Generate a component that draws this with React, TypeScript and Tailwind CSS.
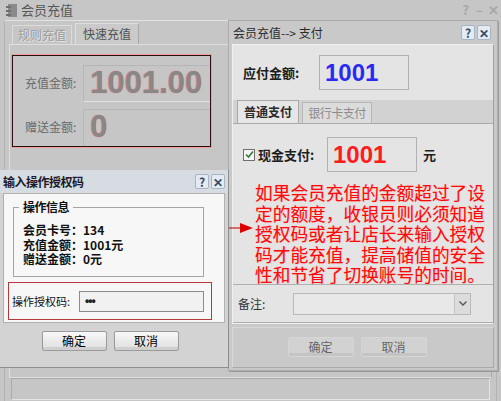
import React from 'react';

const CJK = "font-['Noto_Sans_CJK_SC',sans-serif]";

function TitleBtn({ label, faded }: { label: string; faded?: boolean }) {
  return (
    <span
      className={
        faded
          ? 'flex h-[15px] w-[13px] items-center justify-center text-[13px] font-bold leading-none text-[#a8a8a8]'
          : 'flex h-[15px] w-[14px] items-center justify-center rounded-[2px] border border-[#a9b4c2] bg-[#e3ebf4] text-[12px] font-bold leading-none text-[#3a4a5e]'
      }
    >
      {label}
    </span>
  );
}

function DlgButton({ label, faded }: { label: string; faded?: boolean }) {
  return (
    <button
      className={
        faded
          ? 'h-[20px] w-[66px] rounded-[2px] border border-[#d6d6d6] bg-[#d2d2d2] text-[12px] leading-none text-[#666] shadow-[inset_0_-3px_0_#c4c4c4]'
          : 'h-[20px] w-[65px] rounded-[2px] border border-[#9a9a9a] bg-gradient-to-b from-[#f8f8f8] to-[#dedede] text-[12px] leading-none text-black shadow-[inset_0_-3px_0_#cfcfcf]'
      }
    >
      {label}
    </button>
  );
}

export default function App() {
  return (
    <div className={`relative h-[401px] w-[501px] overflow-hidden bg-[#c6c6c6] ${CJK}`}>
      {/* background window: 会员充值 */}
      <div className="flex h-full flex-col">
        <div className="flex h-[28px] items-center pl-[5px] pr-[1px]">
          <svg width="13" height="16" viewBox="0 0 13 16" className="mr-[3px]">
            <rect x="3" y="2" width="9" height="13" fill="#8a8a8a" />
            <rect x="1" y="4" width="5" height="2" fill="#6e6e6e" />
            <rect x="1" y="8" width="5" height="2" fill="#6e6e6e" />
            <rect x="1" y="12" width="5" height="2" fill="#6e6e6e" />
          </svg>
          <span className="text-[13px] text-[#575757]">会员充值</span>
          <div className="ml-auto flex gap-[1px]">
            <TitleBtn label="?" faded />
            <TitleBtn label="–" faded />
            <TitleBtn label="✕" faded />
          </div>
        </div>
        <div className="mx-[4px] mb-[4px] flex flex-1 flex-col border border-[#b3b3b3] border-t-[#e2e2e2]">
          <div className="flex h-[23px] items-end gap-[3px] pl-[7px]">
            <div className="flex h-[19px] w-[60px] items-center justify-center border border-[#dcdcdc] border-b-0 text-[12px] text-[#9d9d9d] [text-shadow:1px_1px_0_#e6e6e6]">
              规则充值
            </div>
            <div className="flex h-[21px] w-[64px] items-center justify-center border border-[#dedede] border-b-0 border-r-[#a8a8a8] bg-[#cacaca] text-[12px] text-[#505050]">
              快速充值
            </div>
          </div>
          <div className="mx-[4px] flex flex-col border border-[#dedede] border-r-[#a9a9a9] pt-[10px] pl-[2px]">
            <div className="flex h-[92px] w-[199px] flex-col justify-between border border-[#2a1010] pl-[12px] pt-[9px] shadow-[0_0_0_1px_#f39a9a]">
              <div className="flex items-center">
                <span className="w-[58px] whitespace-nowrap text-[12px] text-[#6a6a6a]">充值金额:</span>
                <div className="flex h-[37px] flex-1 items-center border border-[#b5b5b5] border-b-[#e0e0e0] border-r-0 pl-[6px] font-['Liberation_Sans',sans-serif] text-[31px] font-bold text-[#888] [text-shadow:0_0_1px_#ff5050]">
                  1001.00
                </div>
              </div>
              <div className="flex items-center">
                <span className="w-[58px] whitespace-nowrap text-[12px] text-[#6a6a6a]">赠送金额:</span>
                <div className="flex h-[37px] flex-1 items-center border border-[#b5b5b5] border-b-0 border-r-0 pl-[6px] font-['Liberation_Sans',sans-serif] text-[31px] font-bold text-[#888] [text-shadow:0_0_1px_#ff5050]">
                  0
                </div>
              </div>
            </div>
            <div className="h-[230px]" />
          </div>
          <div className="mx-[6px] mt-auto mb-[2px] h-[22px] border border-[#aaa] border-b-[#e4e4e4] border-r-[#e4e4e4]" />
        </div>
      </div>

      {/* payment dialog */}
      <div className="absolute left-[228px] top-[20px] flex h-[351px] w-[270px] flex-col border border-[#ababab] bg-[#c9c9c9] shadow-[1px_1px_0_#9c9c9c]">
        <div className="flex h-[23px] items-center pl-[4px] pr-[6px]">
          <span className="whitespace-nowrap text-[12px] text-[#2c2c2c]">会员充值--&gt; 支付</span>
          <div className="ml-auto flex gap-[2px]">
            <TitleBtn label="?" />
            <TitleBtn label="✕" />
          </div>
        </div>
        <div className="mx-[3px] flex flex-col border border-[#f0f0f0] border-r-[#a0a0a0] bg-[#e4e4e4]">
          <div className="flex h-[55px] items-center pl-[10px]">
            <span className="w-[76px] whitespace-nowrap text-[13px] font-bold text-[#1e1e1e]">应付金额:</span>
            <div className="flex h-[35px] w-[90px] items-center border border-[#b2b2b2] pl-[5px] font-['Liberation_Sans',sans-serif] text-[24px] font-bold text-[#2a2af0]">
              1001
            </div>
          </div>
          <div className="flex h-[24px] items-end gap-[3px] border-b border-[#aaa] bg-[#d2d2d2] pl-[4px]">
            <div className="flex h-[23px] w-[62px] items-center justify-center border border-[#a8a8a8] border-b-0 bg-[#e6e6e6] text-[12px] font-bold text-[#2a2a2a]">
              普通支付
            </div>
            <div className="flex h-[21px] w-[70px] items-center justify-center border border-[#b8b8b8] border-b-0 bg-[#dcdcdc] text-[12px] tracking-[-0.5px] text-[#8c8c8c]">
              银行卡支付
            </div>
          </div>
          <div className="flex h-[161px] flex-col border-b border-[#b0b0b0] pl-[10px] pt-[13px]">
            <div className="flex items-center">
              <span className="mr-[3px] flex h-[12px] w-[12px] items-center justify-center border border-[#6f6f6f] bg-[#f4f4f4]">
                <svg width="9" height="9" viewBox="0 0 9 9">
                  <path d="M1 4.5 L3.5 7 L8 1.5" stroke="#2e7d32" strokeWidth="1.6" fill="none" />
                </svg>
              </span>
              <span className="w-[69px] whitespace-nowrap text-[13px] font-bold text-[#1e1e1e]">现金支付:</span>
              <div className="flex h-[35px] w-[90px] items-center border border-[#b2b2b2] pl-[5px] font-['Liberation_Sans',sans-serif] text-[24px] font-bold text-[#ff1c1c]">
                1001
              </div>
              <span className="ml-[6px] text-[13px] font-bold text-[#1e1e1e]">元</span>
            </div>
          </div>
          <div className="flex h-[38px] items-center border-b border-[#b0b0b0] pl-[5px]">
            <span className="w-[55px] text-[12px] text-[#333]">备注:</span>
            <div className="flex h-[22px] w-[178px] items-stretch border border-[#b9b9b9] bg-[#e8e8e8]">
              <div className="flex-1" />
              <div className="flex w-[16px] items-center justify-center border-l border-[#c4c4c4] bg-[#dcdcdc]">
                <svg width="8" height="5" viewBox="0 0 8 5">
                  <path d="M0.5 0.5 L4 4 L7.5 0.5" stroke="#555" strokeWidth="1.4" fill="none" />
                </svg>
              </div>
            </div>
          </div>
        </div>
        <div className="mx-[3px] mt-[3px] flex h-[41px] justify-center gap-[7px] border border-[#d8d8d8] border-r-[#a8a8a8] border-b-[#a8a8a8] pt-[9px] pr-[12px]">
          <DlgButton label="确定" faded />
          <DlgButton label="取消" faded />
        </div>
      </div>

      {/* annotation */}
      <div className="absolute left-[255px] top-[182px] w-[234px] text-[17.7px] leading-[20.6px] text-[#ff0a0a] [text-shadow:0_0_1px_#ff9e9e]">
        如果会员充值的金额超过了设定的额度，收银员则必须知道授权码或者让店长来输入授权码才能充值，提高储值的安全性和节省了切换账号的时间。
      </div>
      <svg className="absolute left-[192px] top-[222px]" width="62" height="12" viewBox="0 0 62 12">
        <line x1="1" y1="6" x2="50" y2="6" stroke="#b00000" strokeWidth="1.2" />
        <path d="M48 1 L61 6 L48 11 Z" fill="#e00000" />
      </svg>

      {/* authorization dialog */}
      <div className="absolute left-0 top-[170px] flex h-[198px] w-[229px] flex-col border-r border-b border-[#8e8e8e] bg-[#d3d3d3]">
        <div className="flex h-[23px] items-center bg-[#d7dbe2] pl-[3px] pr-[3px]">
          <span className="whitespace-nowrap text-[12px] font-bold tracking-[-0.5px] text-[#1a1a2a]">输入操作授权码</span>
          <div className="ml-auto flex gap-[2px]">
            <TitleBtn label="?" />
            <TitleBtn label="✕" />
          </div>
        </div>
        <div className="mx-[3px] flex h-[130px] flex-col border border-[#b0b0b0] bg-[#f7f7f7] pt-[13px] pl-[9px]">
          <div className="relative h-[70px] w-[191px] border border-[#a4a4a4] pl-[9px] pt-[15px]">
            <span className="absolute -top-[8px] left-[5px] bg-[#f7f7f7] px-[4px] text-[12px] leading-[14px] font-bold tracking-[-0.5px] text-[#111]">
              操作信息
            </span>
            <div className="text-[12px] leading-[14.5px] font-bold text-[#111]">
              <div>会员卡号：134</div>
              <div>充值金额：1001元</div>
              <div>赠送金额：0元</div>
            </div>
          </div>
          <div className="-ml-[5px] mt-[5px] flex h-[38px] w-[204px] items-center border border-[#b23a3a] pl-[3px]">
            <span className="w-[67px] whitespace-nowrap text-[11px] text-[#111]">操作授权码:</span>
            <div className="flex h-[21px] w-[125px] items-center border border-[#8c8c8c] bg-[#f1f1f1] pl-[5px] font-['Liberation_Sans',sans-serif] text-[12px] font-bold tracking-[-1px] text-[#222]">
              •••
            </div>
          </div>
        </div>
        <div className="flex flex-1 justify-center gap-[7px] pt-[8px] pr-[8px]">
          <DlgButton label="确定" />
          <DlgButton label="取消" />
        </div>
      </div>
    </div>
  );
}
